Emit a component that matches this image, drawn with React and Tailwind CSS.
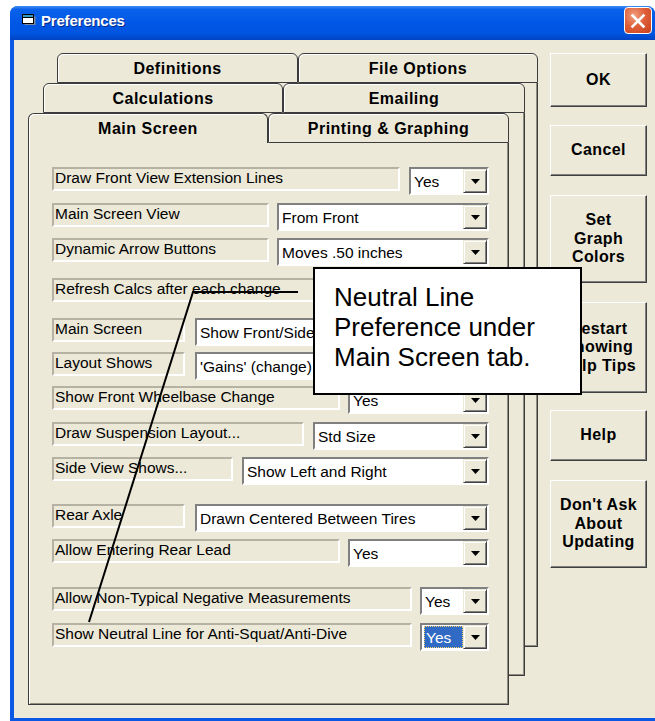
import React from 'react'

const ROWS = [
  { label: 'Draw Front View Extension Lines', value: 'Yes', mt: 'mt-[24px]', lw: 'w-[348px]', cw: 'w-[80px]' },
  { label: 'Main Screen View', value: 'From Front', mt: 'mt-[8px]', lw: 'w-[217px]', cw: 'w-[212px]' },
  { label: 'Dynamic Arrow Buttons', value: 'Moves .50 inches', mt: 'mt-[7px]', lw: 'w-[217px]', cw: 'w-[212px]' },
  { label: 'Refresh Calcs after each change', value: 'Yes', mt: 'mt-[12px]', lw: 'w-[348px]', cw: 'w-[80px]' },
  { label: 'Main Screen', value: 'Show Front/Side View', mt: 'mt-[12px]', lw: 'w-[133px]', cw: 'w-[294px]' },
  { label: 'Layout Shows', value: "'Gains' (change) from Static", mt: 'mt-[6px]', lw: 'w-[133px]', cw: 'w-[294px]' },
  { label: 'Show Front Wheelbase Change', value: 'Yes', mt: 'mt-[6px]', lw: 'w-[288px]', cw: 'w-[141px]' },
  { label: 'Draw Suspension Layout...', value: 'Std Size', mt: 'mt-[8px]', lw: 'w-[252px]', cw: 'w-[176px]' },
  { label: 'Side View Shows...', value: 'Show Left and Right', mt: 'mt-[7px]', lw: 'w-[181px]', cw: 'w-[247px]' },
  { label: 'Rear Axle', value: 'Drawn Centered Between Tires', mt: 'mt-[19px]', lw: 'w-[133px]', cw: 'w-[294px]' },
  { label: 'Allow Entering Rear Lead', value: 'Yes', mt: 'mt-[7px]', lw: 'w-[288px]', cw: 'w-[141px]' },
  { label: 'Allow Non-Typical Negative Measurements', value: 'Yes', mt: 'mt-[20px]', lw: 'w-[360px]', cw: 'w-[69px]' },
  { label: 'Show Neutral Line for Anti-Squat/Anti-Dive', value: 'Yes', mt: 'mt-[8px]', lw: 'w-[360px]', cw: 'w-[69px]', focus: true },
]

const BUTTONS = [
  { lines: ['OK'], h: 'h-[54px]', mt: 'mt-0' },
  { lines: ['Cancel'], h: 'h-[51px]', mt: 'mt-[18px]' },
  { lines: ['Set', 'Graph', 'Colors'], h: 'h-[88px]', mt: 'mt-[19px]' },
  { lines: ['Restart', 'Showing', 'Help Tips'], h: 'h-[91px]', mt: 'mt-[19px]' },
  { lines: ['Help'], h: 'h-[51px]', mt: 'mt-[17px]' },
  { lines: ["Don't Ask", 'About', 'Updating'], h: 'h-[88px]', mt: 'mt-[19px]' },
]

function Tab({ label, w, selected }) {
  return (
    <div
      className={
        'flex h-[30px] shrink-0 justify-center rounded-t-[6px] border border-[#3c3c3c] bg-[#ECE9D8] pt-[5px] text-[16px] font-bold leading-[20px] tracking-[0.5px] shadow-[inset_1px_1px_0_#fff] ' +
        w + (selected ? ' border-b-0' : '')
      }
    >
      {label}
    </div>
  )
}

function Layer({ pos, tabs, children }) {
  return (
    <div className={'col-start-1 row-start-1 flex flex-col ' + pos}>
      <div className="flex">{tabs}</div>
      <div className="flex flex-1 flex-col border border-t-0 border-[#3c3c3c] bg-[#ECE9D8] pl-[23px] pr-[19px] shadow-[inset_1px_0_0_#fff,inset_-1px_-1px_0_#8f8c80]">
        {children}
      </div>
    </div>
  )
}

function Arrow() {
  return (
    <div className="flex h-full w-[24px] shrink-0 items-center justify-center border border-t-[#ECE9D8] border-l-[#ECE9D8] border-b-[#404040] border-r-[#404040] bg-[#ECE9D8] shadow-[inset_1px_1px_0_#fff,inset_-1px_-1px_0_#808080]">
      <svg width="9" height="5" viewBox="0 0 9 5">
        <polygon points="0,0 9,0 4.5,5" fill="#000" />
      </svg>
    </div>
  )
}

function Combo({ value, cw, focus }) {
  return (
    <div className={'ml-auto flex h-[28px] shrink-0 border-2 border-t-[#808080] border-l-[#808080] border-b-white border-r-white bg-white ' + cw}>
      <div className="flex min-w-0 flex-1 overflow-hidden">
        {focus ? (
          <div className="ml-[2px] mt-[1px] h-[22px] flex-1 border border-dotted border-[#f5d36a] bg-[#316AC5] pl-[1px] text-[15.5px] leading-[21px] text-white">
            {value}
          </div>
        ) : (
          <div className="whitespace-nowrap pl-[3px] text-[15.5px] leading-[25px]">{value}</div>
        )}
      </div>
      <Arrow />
    </div>
  )
}

function Row({ row }) {
  return (
    <div className={'flex h-[28px] items-start ' + row.mt}>
      <div className={'h-[24px] shrink-0 overflow-hidden whitespace-nowrap border-2 border-t-[#b5b2a3] border-l-[#b5b2a3] border-b-white border-r-white px-[1px] text-[15.5px] leading-[17px] ' + row.lw}>
        {row.label}
      </div>
      <Combo value={row.value} cw={row.cw} focus={row.focus} />
    </div>
  )
}

function TitleBar() {
  return (
    <div className="flex h-[34px] shrink-0 items-start rounded-t-[8px] bg-[linear-gradient(to_bottom,#3d8df5_0%,#0a62ea_10%,#0058e6_45%,#0055e0_80%,#0043c4_100%)]">
      <svg className="ml-[12px] mt-[7px]" width="15" height="13" viewBox="0 0 15 13">
        <rect x="2.5" y="3.5" width="11" height="8.5" fill="#7b8a9a" />
        <rect x="0.5" y="1.5" width="11" height="9" fill="#fff" stroke="#000" />
        <rect x="1" y="2" width="10" height="2.5" fill="#2e9cc4" />
        <line x1="0.5" y1="4.5" x2="11.5" y2="4.5" stroke="#000" />
      </svg>
      <div className="ml-[4px] mt-[6px] text-[15px] font-bold leading-[18px] tracking-[-0.2px] text-white [text-shadow:1px_1px_0_#0a2a8a]">
        Preferences
      </div>
      <div className="ml-auto mr-[3px] mt-[1px] flex h-[27px] w-[28px] items-center justify-center rounded-[4px] border border-white bg-[radial-gradient(circle_at_35%_30%,#f0a080_0%,#e0603a_45%,#c8401c_100%)]">
        <svg width="16" height="16" viewBox="0 0 16 16">
          <path d="M2.5 2.5 L13.5 13.5 M13.5 2.5 L2.5 13.5" stroke="#fff" strokeWidth="2.6" strokeLinecap="square" />
        </svg>
      </div>
    </div>
  )
}

export default function App() {
  return (
    <div className="relative h-[721px] w-[655px] overflow-hidden bg-white pl-[10px] pt-[6px] font-['Liberation_Sans',Arial,sans-serif] text-black">
      <div className="flex h-full flex-col rounded-t-[8px] bg-[#0a58e4]">
        <TitleBar />
        <div className="mb-[3px] ml-[4px] flex flex-1 bg-[#ECE9D8] pl-[14px] pt-[13px]">
          {/* Stacked tab pages */}
          <div className="grid w-[510px] shrink-0 self-start">
            <Layer
              pos="ml-[29px] mt-0 w-[481px] h-[594px]"
              tabs={[
                <Tab key="d" label="Definitions" w="w-[241px]" />,
                <Tab key="f" label="File Options" w="w-[240px]" />,
              ]}
            />
            <Layer
              pos="ml-[15px] mt-[30px] w-[482px] h-[593px]"
              tabs={[
                <Tab key="c" label="Calculations" w="w-[240px]" />,
                <Tab key="e" label="Emailing" w="w-[242px]" />,
              ]}
            />
            <Layer
              pos="ml-0 mt-[60px] w-[481px] h-[592px]"
              tabs={[
                <Tab key="m" label="Main Screen" w="w-[240px]" selected />,
                <Tab key="p" label="Printing & Graphing" w="w-[241px]" />,
              ]}
            >
              {ROWS.map(r => (
                <Row key={r.label} row={r} />
              ))}
            </Layer>
          </div>

          {/* Buttons */}
          <div className="ml-[12px] flex w-[97px] flex-col">
            {BUTTONS.map(b => (
              <div
                key={b.lines[0]}
                className={
                  'flex flex-col items-center justify-center border border-t-white border-l-white border-b-[#404040] border-r-[#404040] bg-[#ECE9D8] text-[16px] font-bold leading-[18.5px] tracking-[0.4px] shadow-[inset_-1px_-1px_0_#808080] ' +
                  b.h + ' ' + b.mt
                }
              >
                {b.lines.map(l => (
                  <span key={l} className="whitespace-nowrap">{l}</span>
                ))}
              </div>
            ))}
          </div>
        </div>
      </div>

      {/* Annotation pointer */}
      <svg className="pointer-events-none absolute left-0 top-0" width="655" height="721">
        <polyline points="298,292 193,292 89,622" fill="none" stroke="#000" strokeWidth="2" />
      </svg>
      <div className="absolute left-[313px] top-[267px] h-[128px] w-[269px] border-2 border-black bg-white pl-[19px] pt-[13px] text-[26px] leading-[30px]">
        <div>Neutral Line</div>
        <div>Preference under</div>
        <div>Main Screen tab.</div>
      </div>
    </div>
  )
}
